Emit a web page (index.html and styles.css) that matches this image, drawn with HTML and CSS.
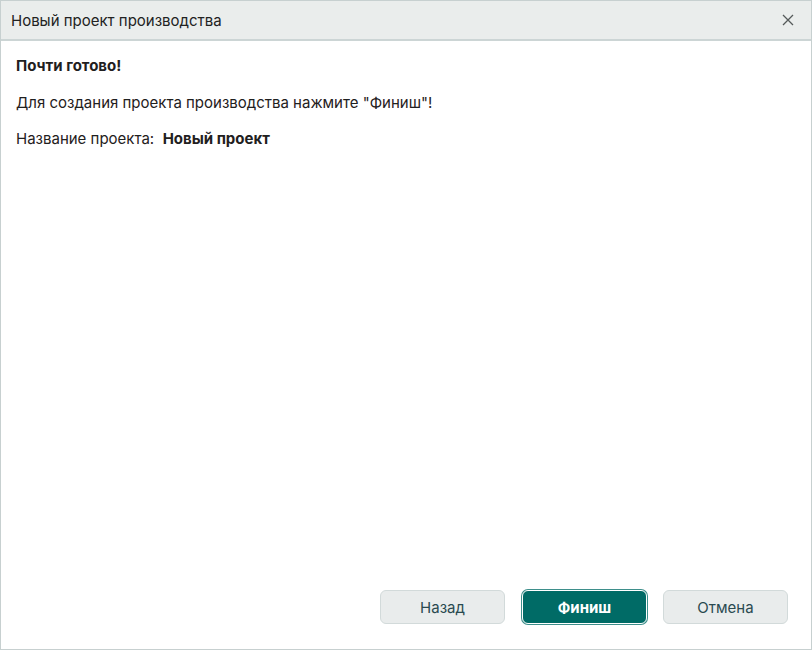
FILE: index.html
```html
<!DOCTYPE html>
<html lang="ru">

<head>
    <meta charset="UTF-8">
    <title>Новый проект производства</title>
    <link rel="stylesheet" href="styles.css">
</head>

<body>
    <div class="dialog">
        <div class="dialog-header">
            <span class="dialog-title">Новый проект производства</span>
            <a href="javascript:;" class="dialog-close">
                <svg width="12" height="12" viewBox="0 0 12 12">
                    <path d="M1 1 L11 11 M11 1 L1 11" stroke="#555a5a" stroke-width="1.3" fill="none"/>
                </svg>
            </a>
        </div>
        <div class="dialog-body">
            <p class="lead">Почти готово!</p>
            <p>Для создания проекта производства нажмите "Финиш"!</p>
            <p>Название проекта:&nbsp; <b>Новый проект</b></p>
        </div>
        <div class="dialog-footer">
            <button class="btn btn-back">Назад</button>
            <button class="btn btn-primary">Финиш</button>
            <button class="btn">Отмена</button>
        </div>
    </div>
</body>

</html>
```

FILE: styles.css
```css
* {
    margin: 0;
    padding: 0;
    box-sizing: border-box;
}

body {
    background-color: #fff;
    font-family: Inter, "Noto Sans", sans-serif;
    font-size: 15px;
    color: #1f2020;
}

.dialog {
    width: 812px;
    height: 650px;
    border: 1px solid #c7d0d0;
    display: flex;
    flex-direction: column;
}

.dialog-header {
    height: 40px;
    background-color: #eaedec;
    border-bottom: 2px solid #ccd5d5;
    display: flex;
    align-items: center;
    justify-content: space-between;
    padding: 0 17px 0 10px;
}

.dialog-title {
    font-size: 15px;
    color: #222;
}

.dialog-close {
    display: block;
    width: 12px;
    height: 12px;
    line-height: 0;
}

.dialog-body {
    flex: 1;
    padding: 15px 15px;
}

.dialog-body p {
    line-height: 20px;
    margin-bottom: 16.5px;
}

.dialog-body .lead {
    font-weight: 700;
}

.dialog-body b {
    font-weight: 700;
}

.dialog-footer {
    display: flex;
    justify-content: flex-end;
    gap: 16px;
    padding: 0 23px 25px 0;
}

.btn {
    width: 125px;
    height: 34px;
    border: 1px solid #d2dada;
    border-radius: 6px;
    background-color: #e9ecec;
    font-family: Inter, "Noto Sans", sans-serif;
    font-size: 15px;
    color: #2a4a50;
}

.btn-back {
    margin-right: 1px;
}

.btn-primary {
    background-color: #006b66;
    color: #fff;
    font-weight: 700;
    border: 1px solid #fff;
    box-shadow: 0 0 0 1px #3e8f8b;
}
```
